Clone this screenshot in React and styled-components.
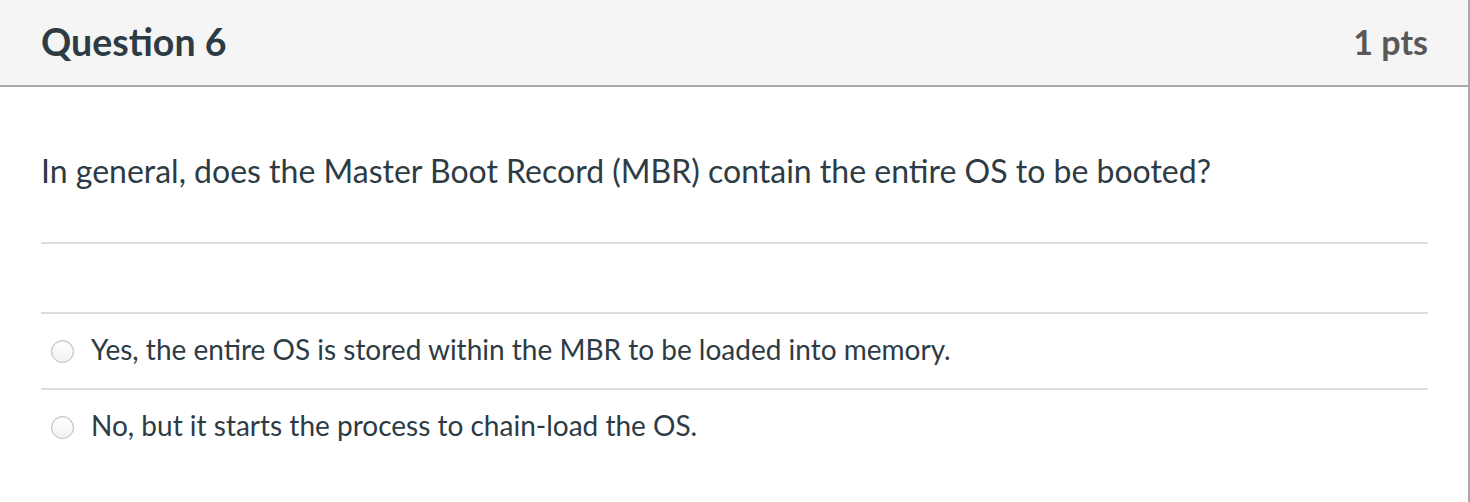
import React from "react";
import styled, { createGlobalStyle } from "styled-components";

const GlobalStyle = createGlobalStyle`
  html, body {
    margin: 0;
    padding: 0;
    background: #ffffff;
  }
  body {
    font-family: Lato, "Open Sans", sans-serif;
    color: #2d3b45;
  }
`;

const answers = [
  { id: 1, text: "Yes, the entire OS is stored within the MBR to be loaded into memory." },
  { id: 2, text: "No, but it starts the process to chain-load the OS." },
];

export default function App() {
  return (
    <>
      <GlobalStyle />
      <QuestionCard>
        <Header>
          <Title>Question 6</Title>
          <Points>1 pts</Points>
        </Header>
        <Body>
          <QuestionText>
            In general, does the Master Boot Record (MBR) contain the entire OS
            to be booted?
          </QuestionText>
          <Spacer />
          <AnswerList>
            {answers.map((a) => (
              <AnswerRow key={a.id}>
                <Radio />
                <AnswerLabel>{a.text}</AnswerLabel>
              </AnswerRow>
            ))}
          </AnswerList>
        </Body>
      </QuestionCard>
    </>
  );
}

const QuestionCard = styled.div`
  box-sizing: border-box;
  width: 1470px;
  height: 502px;
  border-right: 2px solid #a9a9a9;
  overflow: hidden;
`;

const Header = styled.div`
  box-sizing: border-box;
  height: 87px;
  background: #f5f5f5;
  border-bottom: 2px solid #a9a9a9;
  display: flex;
  align-items: center;
  justify-content: space-between;
  padding: 0 40px 2px 41px;
`;

const Title = styled.h2`
  margin: 0;
  font-size: 37.5px;
  font-weight: 700;
  color: #2d3b45;
`;

const Points = styled.div`
  font-size: 34px;
  font-weight: 700;
  color: #585858;
`;

const Body = styled.div`
  padding: 0 40px 0 41px;
`;

const QuestionText = styled.p`
  margin: 0;
  padding: 66px 0 53px;
  font-size: 32px;
  line-height: 36px;
  border-bottom: 2px solid #dddddd;
`;

const Spacer = styled.div`
  height: 68px;
`;

const AnswerList = styled.div`
  display: flex;
  flex-direction: column;
`;

const AnswerRow = styled.label`
  box-sizing: border-box;
  height: 76px;
  border-top: 2px solid #dddddd;
  display: flex;
  align-items: center;
  gap: 17px;
  padding-left: 10px;
`;

const Radio = styled.span`
  box-sizing: border-box;
  width: 23px;
  height: 23px;
  border-radius: 50%;
  border: 1px solid #b9b9b9;
  background: linear-gradient(#ffffff, #f2f2f2);
  box-shadow: inset 0 1px 1px rgba(0, 0, 0, 0.08);
`;

const AnswerLabel = styled.span`
  font-size: 28px;
  line-height: 34px;
  margin-top: -5px;
  color: #2d3b45;
`;
